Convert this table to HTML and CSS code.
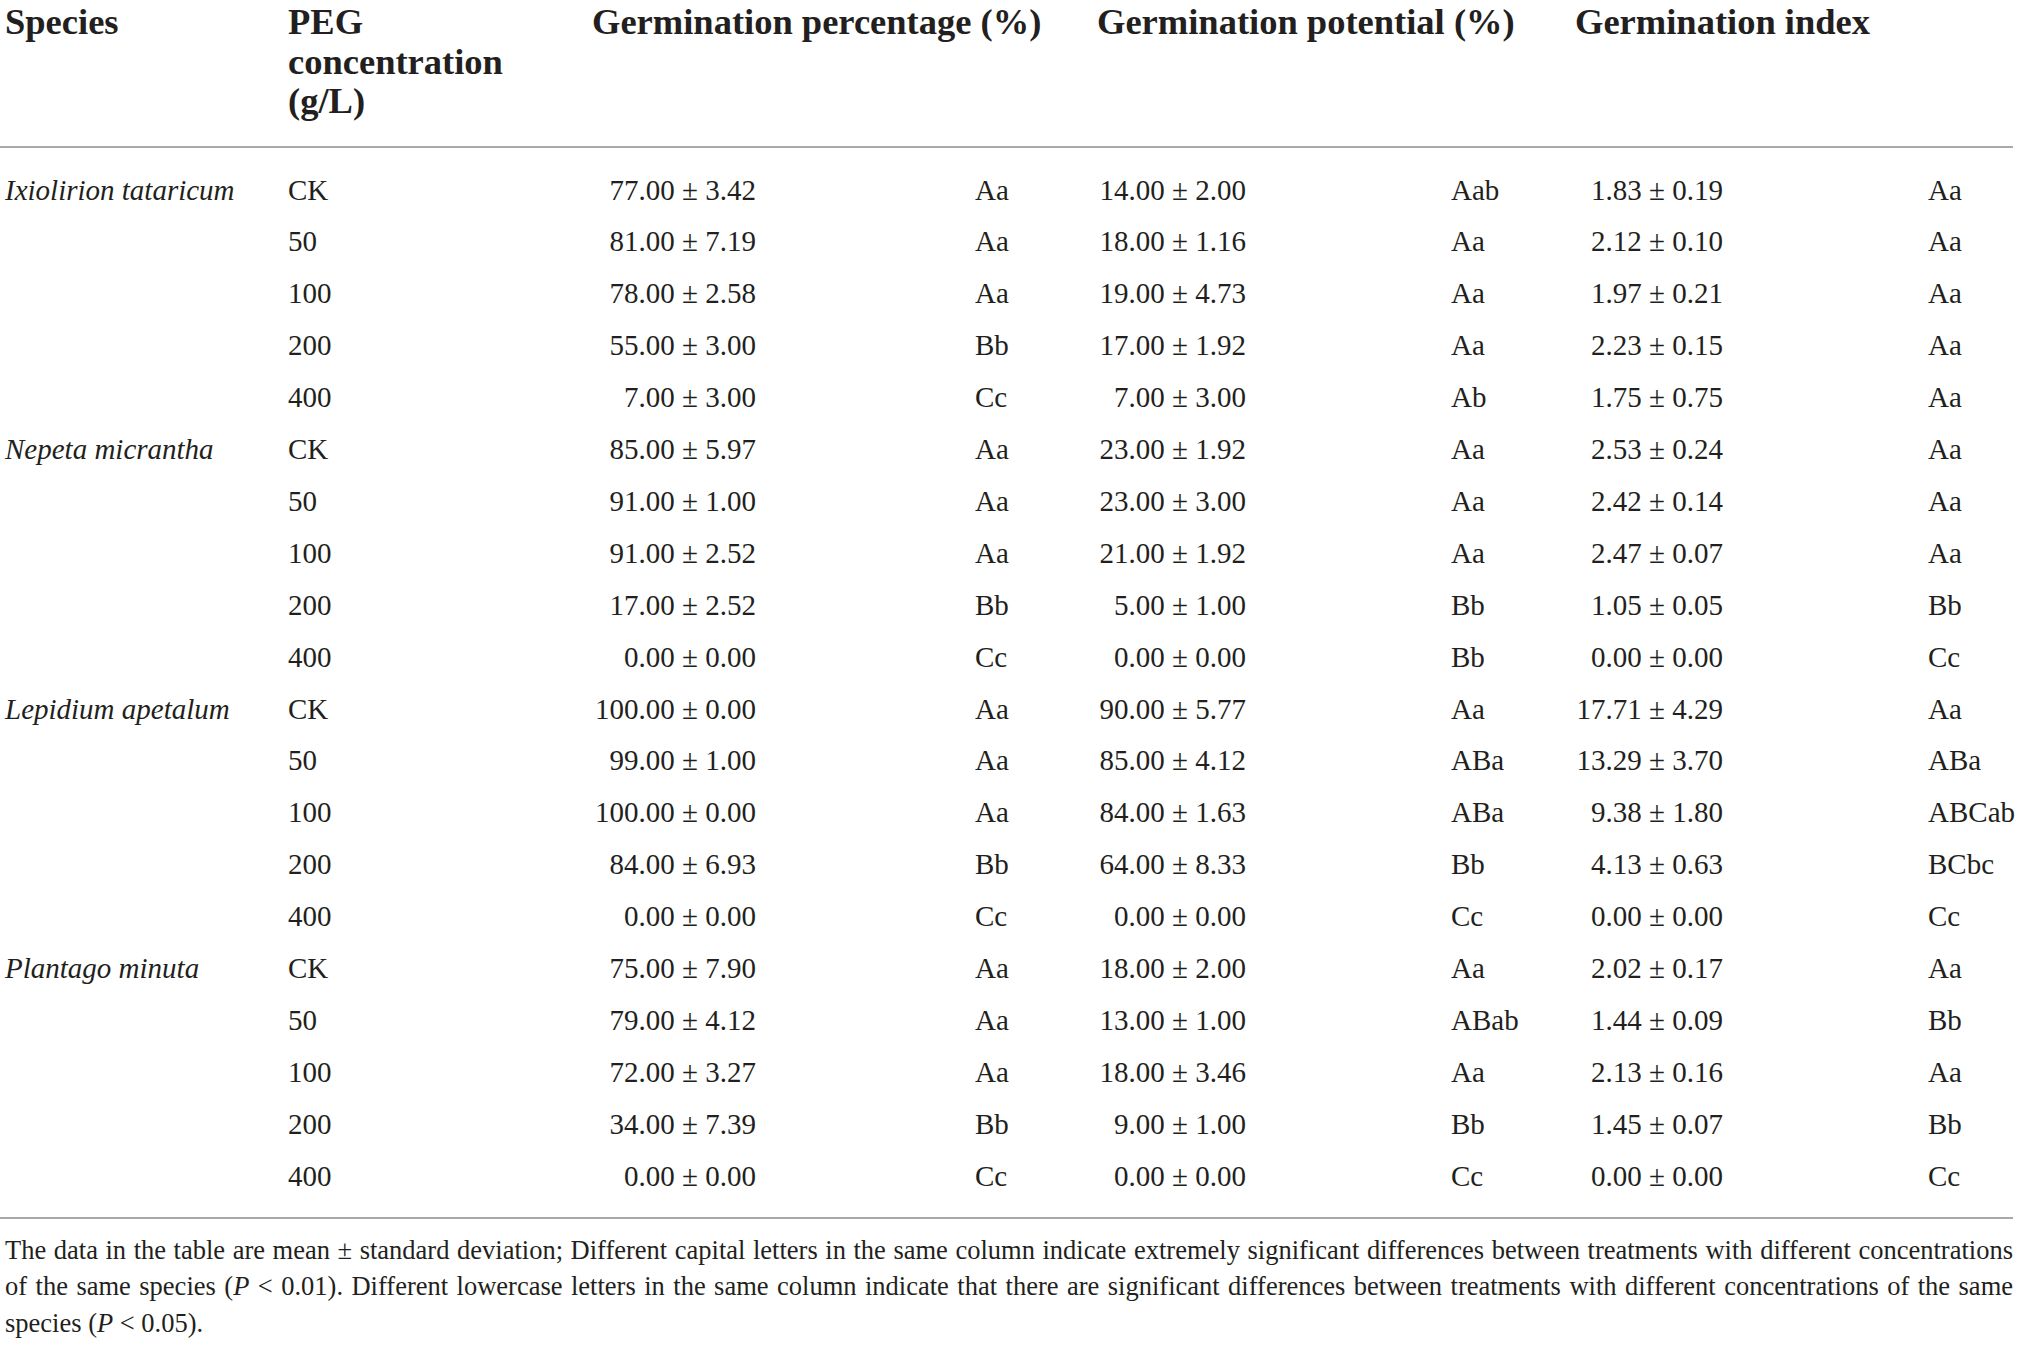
FILE: index.html
```html
<!DOCTYPE html>
<html lang="en">
<head>
<meta charset="utf-8">
<title>Germination under PEG stress</title>
<link rel="stylesheet" href="styles.css">
</head>
<body>
<div class="page">
<table class="data">
<colgroup>
<col class="c-sp"><col class="c-peg"><col class="c-v1"><col class="c-l1"><col class="c-v2"><col class="c-l2"><col class="c-v3"><col class="c-l3">
</colgroup>
<thead>
<tr>
<th class="h-first">Species</th>
<th>PEG<br>concentration<br>(g/L)</th>
<th colspan="2">Germination percentage (%)</th>
<th colspan="2">Germination potential (%)</th>
<th colspan="2">Germination index</th>
</tr>
</thead>
<tbody>
<tr class="first"><td class="sp">Ixiolirion tataricum</td><td>CK</td><td class="v">77.00 ± 3.42</td><td class="l1">Aa</td><td class="v">14.00 ± 2.00</td><td class="l">Aab</td><td class="v">1.83 ± 0.19</td><td class="l">Aa</td></tr>
<tr><td class="sp"></td><td>50</td><td class="v">81.00 ± 7.19</td><td class="l1">Aa</td><td class="v">18.00 ± 1.16</td><td class="l">Aa</td><td class="v">2.12 ± 0.10</td><td class="l">Aa</td></tr>
<tr><td class="sp"></td><td>100</td><td class="v">78.00 ± 2.58</td><td class="l1">Aa</td><td class="v">19.00 ± 4.73</td><td class="l">Aa</td><td class="v">1.97 ± 0.21</td><td class="l">Aa</td></tr>
<tr><td class="sp"></td><td>200</td><td class="v">55.00 ± 3.00</td><td class="l1">Bb</td><td class="v">17.00 ± 1.92</td><td class="l">Aa</td><td class="v">2.23 ± 0.15</td><td class="l">Aa</td></tr>
<tr><td class="sp"></td><td>400</td><td class="v">7.00 ± 3.00</td><td class="l1">Cc</td><td class="v">7.00 ± 3.00</td><td class="l">Ab</td><td class="v">1.75 ± 0.75</td><td class="l">Aa</td></tr>
<tr><td class="sp">Nepeta micrantha</td><td>CK</td><td class="v">85.00 ± 5.97</td><td class="l1">Aa</td><td class="v">23.00 ± 1.92</td><td class="l">Aa</td><td class="v">2.53 ± 0.24</td><td class="l">Aa</td></tr>
<tr><td class="sp"></td><td>50</td><td class="v">91.00 ± 1.00</td><td class="l1">Aa</td><td class="v">23.00 ± 3.00</td><td class="l">Aa</td><td class="v">2.42 ± 0.14</td><td class="l">Aa</td></tr>
<tr><td class="sp"></td><td>100</td><td class="v">91.00 ± 2.52</td><td class="l1">Aa</td><td class="v">21.00 ± 1.92</td><td class="l">Aa</td><td class="v">2.47 ± 0.07</td><td class="l">Aa</td></tr>
<tr><td class="sp"></td><td>200</td><td class="v">17.00 ± 2.52</td><td class="l1">Bb</td><td class="v">5.00 ± 1.00</td><td class="l">Bb</td><td class="v">1.05 ± 0.05</td><td class="l">Bb</td></tr>
<tr><td class="sp"></td><td>400</td><td class="v">0.00 ± 0.00</td><td class="l1">Cc</td><td class="v">0.00 ± 0.00</td><td class="l">Bb</td><td class="v">0.00 ± 0.00</td><td class="l">Cc</td></tr>
<tr><td class="sp">Lepidium apetalum</td><td>CK</td><td class="v">100.00 ± 0.00</td><td class="l1">Aa</td><td class="v">90.00 ± 5.77</td><td class="l">Aa</td><td class="v">17.71 ± 4.29</td><td class="l">Aa</td></tr>
<tr><td class="sp"></td><td>50</td><td class="v">99.00 ± 1.00</td><td class="l1">Aa</td><td class="v">85.00 ± 4.12</td><td class="l">ABa</td><td class="v">13.29 ± 3.70</td><td class="l">ABa</td></tr>
<tr><td class="sp"></td><td>100</td><td class="v">100.00 ± 0.00</td><td class="l1">Aa</td><td class="v">84.00 ± 1.63</td><td class="l">ABa</td><td class="v">9.38 ± 1.80</td><td class="l">ABCab</td></tr>
<tr><td class="sp"></td><td>200</td><td class="v">84.00 ± 6.93</td><td class="l1">Bb</td><td class="v">64.00 ± 8.33</td><td class="l">Bb</td><td class="v">4.13 ± 0.63</td><td class="l">BCbc</td></tr>
<tr><td class="sp"></td><td>400</td><td class="v">0.00 ± 0.00</td><td class="l1">Cc</td><td class="v">0.00 ± 0.00</td><td class="l">Cc</td><td class="v">0.00 ± 0.00</td><td class="l">Cc</td></tr>
<tr><td class="sp">Plantago minuta</td><td>CK</td><td class="v">75.00 ± 7.90</td><td class="l1">Aa</td><td class="v">18.00 ± 2.00</td><td class="l">Aa</td><td class="v">2.02 ± 0.17</td><td class="l">Aa</td></tr>
<tr><td class="sp"></td><td>50</td><td class="v">79.00 ± 4.12</td><td class="l1">Aa</td><td class="v">13.00 ± 1.00</td><td class="l">ABab</td><td class="v">1.44 ± 0.09</td><td class="l">Bb</td></tr>
<tr><td class="sp"></td><td>100</td><td class="v">72.00 ± 3.27</td><td class="l1">Aa</td><td class="v">18.00 ± 3.46</td><td class="l">Aa</td><td class="v">2.13 ± 0.16</td><td class="l">Aa</td></tr>
<tr><td class="sp"></td><td>200</td><td class="v">34.00 ± 7.39</td><td class="l1">Bb</td><td class="v">9.00 ± 1.00</td><td class="l">Bb</td><td class="v">1.45 ± 0.07</td><td class="l">Bb</td></tr>
<tr class="last"><td class="sp"></td><td>400</td><td class="v">0.00 ± 0.00</td><td class="l1">Cc</td><td class="v">0.00 ± 0.00</td><td class="l">Cc</td><td class="v">0.00 ± 0.00</td><td class="l">Cc</td></tr>
</tbody>
</table>
<div class="note">
<span class="note-line just">The data in the table are mean ± standard deviation; Different capital letters in the same column indicate extremely significant differences between treatments with different concentrations</span>
<span class="note-line just">of the same species (<i>P</i> &lt; 0.01). Different lowercase letters in the same column indicate that there are significant differences between treatments with different concentrations of the same</span>
<span class="note-line">species (<i>P</i> &lt; 0.05).</span>
</div>
</div>
</body>
</html>
```
FILE: styles.css
```css
html, body {
  margin: 0;
  padding: 0;
  background: #ffffff;
}

body {
  font-family: "Liberation Serif", "Times New Roman", serif;
  color: #231f20;
}

.page {
  width: 2013px;
}

.data {
  table-layout: fixed;
  width: 2013px;
  border-collapse: collapse;
  border-spacing: 0;
}

.c-sp { width: 288px; }
.c-peg { width: 304px; }
.c-v1 { width: 164px; }
.c-l1 { width: 341px; }
.c-v2 { width: 149px; }
.c-l2 { width: 329px; }
.c-v3 { width: 148px; }
.c-l3 { width: 290px; }

.data th {
  font-size: 36.5px;
  font-weight: bold;
  line-height: 39.5px;
  text-align: left;
  vertical-align: top;
  padding: 2px 0 25px 0;
  border-bottom: 2px solid #a9a9a9;
  white-space: nowrap;
}

.data th.h-first,
.data td.sp {
  padding-left: 5px;
}

.data td {
  font-size: 29px;
  line-height: 51.9px;
  padding: 0;
  vertical-align: middle;
  white-space: nowrap;
}

.data td.sp {
  font-style: italic;
}

.data td.v {
  text-align: right;
}

.data td.l1 {
  padding-left: 219px;
}

.data td.l {
  padding-left: 205px;
}

.data tr.first td {
  padding-top: 17px;
}

.data tr.last td {
  padding-bottom: 14px;
  border-bottom: 2px solid #a9a9a9;
}

.note {
  margin-top: 13px;
  padding-left: 5px;
  font-size: 26.5px;
  line-height: 36.7px;
}

.note-line {
  display: block;
  white-space: nowrap;
}

.note-line.just {
  text-align: justify;
  text-align-last: justify;
}
```
